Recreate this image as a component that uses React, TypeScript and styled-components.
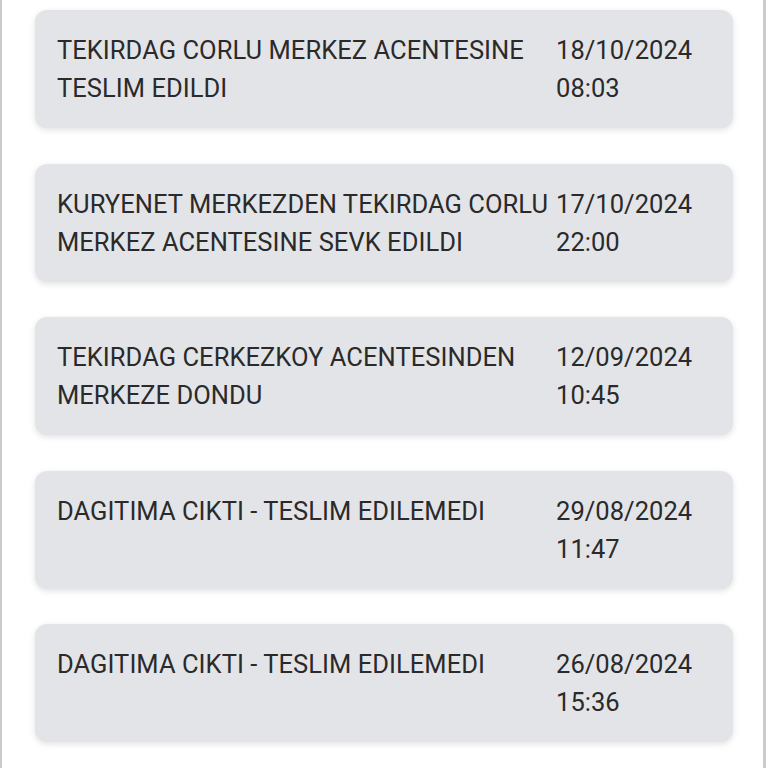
import React from "react";
import styled, { createGlobalStyle } from "styled-components";

const GlobalStyle = createGlobalStyle`
  html, body {
    margin: 0;
    padding: 0;
    background: #ffffff;
  }
  body {
    font-family: Roboto, "Noto Sans", "Liberation Sans", sans-serif;
  }
`;

type Movement = {
  text: string;
  date: string;
  time: string;
};

const movements: Movement[] = [
  {
    text: "TEKIRDAG CORLU MERKEZ ACENTESINE TESLIM EDILDI",
    date: "18/10/2024",
    time: "08:03",
  },
  {
    text: "KURYENET MERKEZDEN TEKIRDAG CORLU MERKEZ ACENTESINE SEVK EDILDI",
    date: "17/10/2024",
    time: "22:00",
  },
  {
    text: "TEKIRDAG CERKEZKOY ACENTESINDEN MERKEZE DONDU",
    date: "12/09/2024",
    time: "10:45",
  },
  {
    text: "DAGITIMA CIKTI - TESLIM EDILEMEDI",
    date: "29/08/2024",
    time: "11:47",
  },
  {
    text: "DAGITIMA CIKTI - TESLIM EDILEMEDI",
    date: "26/08/2024",
    time: "15:36",
  },
];

export default function App() {
  return (
    <>
      <GlobalStyle />
      <Frame>
        <List>
          {movements.map((m, i) => (
            <Card key={i}>
              <Description>{m.text}</Description>
              <Stamp>
                <span>{m.date}</span>
                <span>{m.time}</span>
              </Stamp>
            </Card>
          ))}
        </List>
      </Frame>
    </>
  );
}

const Frame = styled.div`
  box-sizing: border-box;
  width: 766px;
  min-height: 768px;
  border-left: 2px solid #cbcbcb;
  border-right: 3px solid #cbcbcb;
  padding: 10px 30px 0 33px;
  overflow: hidden;
`;

const List = styled.div`
  display: flex;
  flex-direction: column;
  gap: 35.5px;
`;

const Card = styled.div`
  display: grid;
  grid-template-columns: 497px 1fr;
  column-gap: 2px;
  padding: 21px 22px;
  background: #e3e4e7;
  border-radius: 12px;
  box-shadow: 0 2px 6px rgba(0, 0, 0, 0.12);
  color: #2a2a2b;
  font-size: 25.5px;
  letter-spacing: 0.05px;
  line-height: 38px;
  min-height: 76px;
`;

const Description = styled.div`
  word-wrap: break-word;
`;

const Stamp = styled.div`
  display: flex;
  flex-direction: column;
  white-space: nowrap;
`;
